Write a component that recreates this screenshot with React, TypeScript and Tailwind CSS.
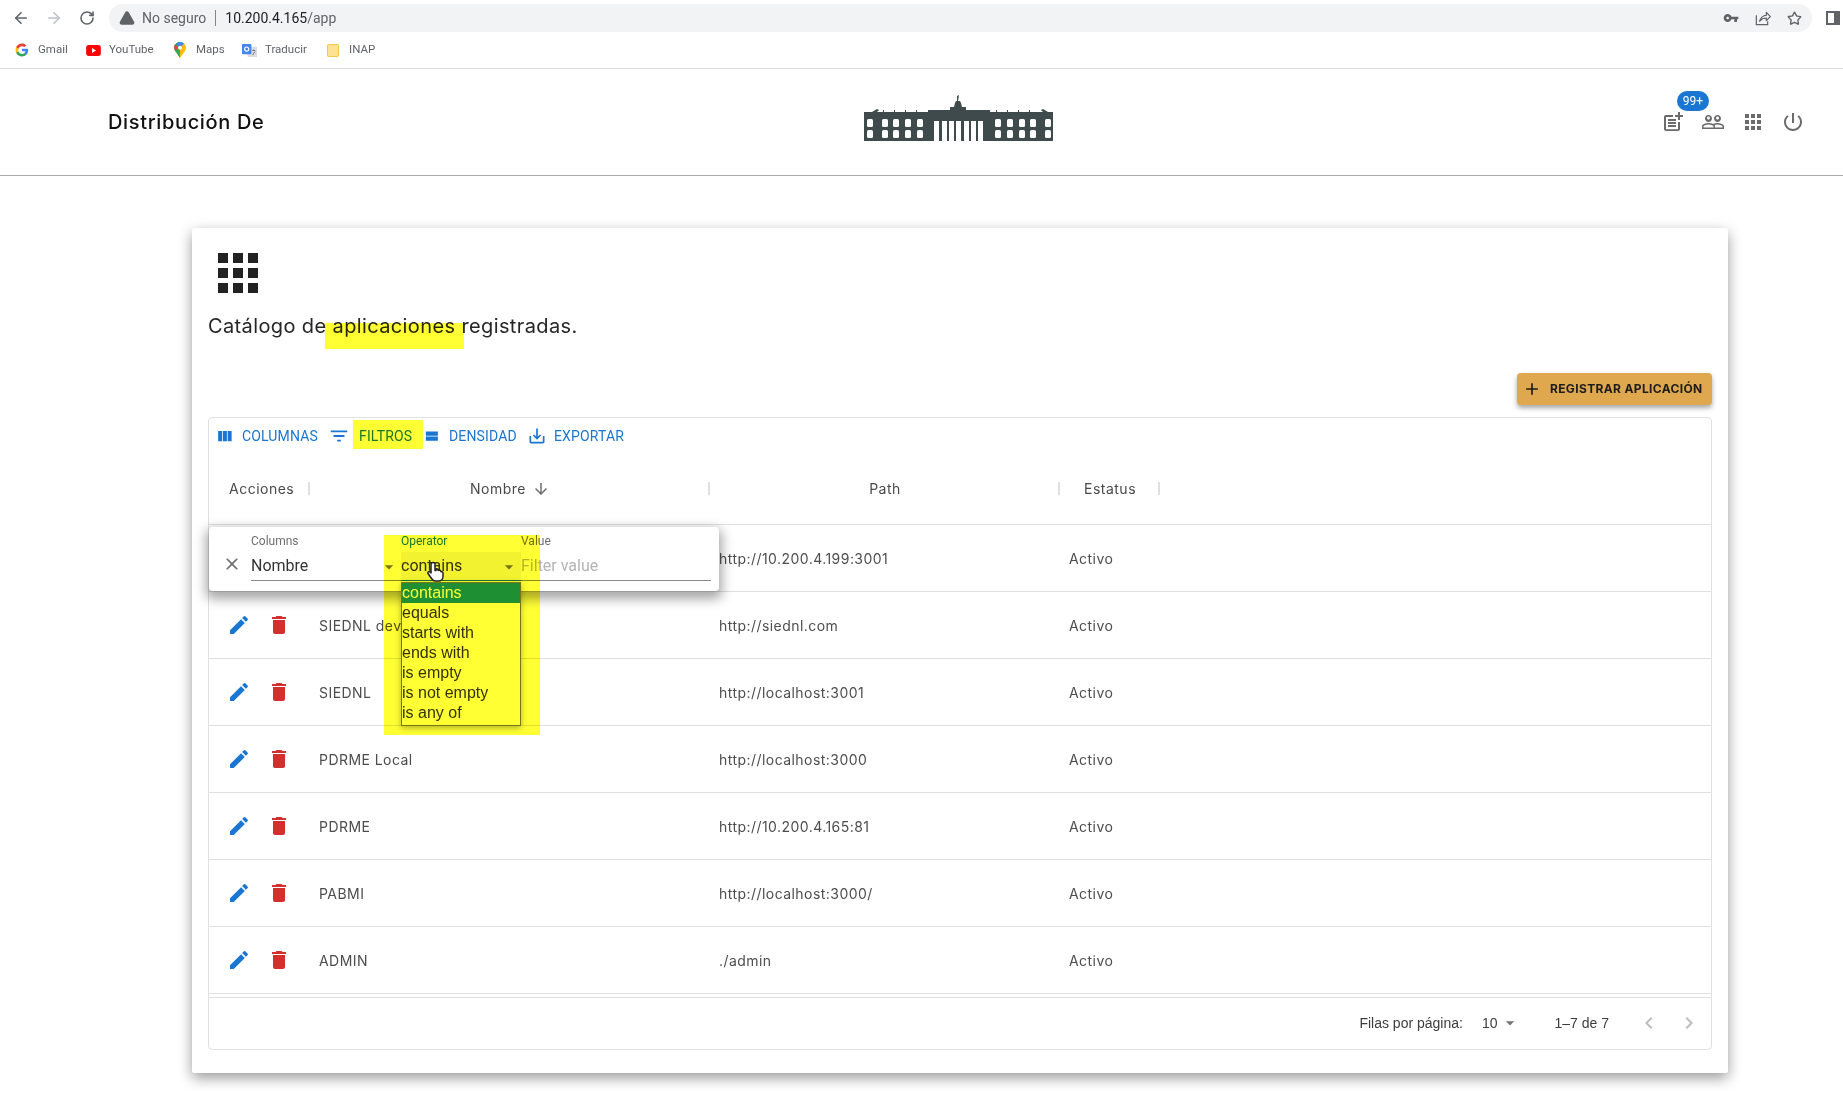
import { ArrowLeft, ArrowRight, RotateCw, TriangleAlert, Star } from "lucide-react";

const BODY_FONT = "font-['Inter','Liberation_Sans',sans-serif]";
const ROBOTO = "font-['Roboto','Liberation_Sans',sans-serif]";
const ARIAL = "font-['Liberation_Sans',Arial,sans-serif]";

const ICONS = {
  columns: "M10 18h5V5h-5v13zm-6 0h5V5H4v13zM16 5v13h5V5h-5z",
  filter: "M10 18h4v-2h-4v2zM3 6v2h18V6H3zm3 7h12v-2H6v2z",
  density: "M4 18h17v-6H4v6zM4 5v6h17V5H4z",
  exportIcon:
    "M19 12v7H5v-7H3v7c0 1.1.9 2 2 2h14c1.1 0 2-.9 2-2v-7h-2zm-6 .67l2.59-2.58L17 11.5l-5 5-5-5 1.41-1.41L11 12.67V3h2z",
  edit: "M3 17.25V21h3.75L17.81 9.94l-3.75-3.75L3 17.25zM20.71 7.04c.39-.39.39-1.02 0-1.41l-2.34-2.34a.9959.9959 0 0 0-1.41 0l-1.83 1.83 3.75 3.75 1.83-1.83z",
  trash: "M6 19c0 1.1.9 2 2 2h8c1.1 0 2-.9 2-2V7H6v12zM19 4h-3.5l-1-1h-5l-1 1H5v2h14V4z",
  apps: "M4 8h4V4H4v4zm6 12h4v-4h-4v4zm-6 0h4v-4H4v4zm0-6h4v-4H4v4zm6 0h4v-4h-4v4zm6-10v4h4V4h-4zm-6 4h4V4h-4v4zm6 6h4v-4h-4v4zm0 6h4v-4h-4v4z",
  add: "M19 13h-6v6h-2v-6H5v-2h6V5h2v6h6v2z",
  close:
    "M19 6.41 17.59 5 12 10.59 6.41 5 5 6.41 10.59 12 5 17.59 6.41 19 12 13.41 17.59 19 19 17.59 13.41 12z",
  arrowDown: "M20 12l-1.41-1.41L13 16.17V4h-2v12.17l-5.58-5.59L4 12l8 8 8-8z",
  dropDown: "M7 10l5 5 5-5z",
  chevronLeft: "M15.41 7.41 14 6l-6 6 6 6 1.41-1.41L10.83 12z",
  chevronRight: "M10 6 8.59 7.41 13.17 12l-4.58 4.59L10 18l6-6z",
  people:
    "M16.5 13c-1.2 0-3.07.34-4.5 1-1.43-.67-3.3-1-4.5-1C5.33 13 1 14.08 1 16.25V19h22v-2.75c0-2.17-4.33-3.25-6.5-3.25zm-4 4.5h-10v-1.25c0-.54 2.56-1.75 5-1.75s5 1.21 5 1.75v1.25zm9 0H14v-1.25c0-.46-.2-.86-.52-1.22.88-.3 1.96-.53 3.02-.53 2.44 0 5 1.21 5 1.75v1.25zM7.5 12c1.93 0 3.5-1.57 3.5-3.5S9.43 5 7.5 5 4 6.57 4 8.5 5.57 12 7.5 12zm0-5.5c.83 0 1.5.67 1.5 1.5s-.67 1.5-1.5 1.5S6 8.83 6 8s.67-1.5 1.5-1.5zm9 5.5c1.93 0 3.5-1.57 3.5-3.5S18.43 5 16.5 5 13 6.57 13 8.5s1.57 3.5 3.5 3.5zm0-5.5c.83 0 1.5.67 1.5 1.5s-.67 1.5-1.5 1.5S15 8.83 15 8s.67-1.5 1.5-1.5z",
  power:
    "M13 3h-2v10h2V3zm4.83 2.17-1.42 1.42C17.99 7.86 19 9.81 19 12c0 3.87-3.13 7-7 7s-7-3.13-7-7c0-2.19 1.01-4.14 2.58-5.42L6.17 5.17C4.23 6.82 3 9.26 3 12c0 4.97 4.03 9 9 9s9-4.03 9-9c0-2.74-1.23-5.18-3.17-6.83z",
  postAdd:
    "M17 19.22H5V7h7V5H5c-1.1 0-2 .9-2 2v12c0 1.1.9 2 2 2h12c1.1 0 2-.9 2-2v-7h-2v7.22zM19 2h-2v3h-3c.01.01 0 2 0 2h3v2.99c.01.01 2 0 2 0V7h3V5h-3V2zM7 9h8v2H7zM7 12v2h8v-2h-3zM7 15h8v2H7z",
  key: "M12.65 10C11.83 7.67 9.61 6 7 6c-3.31 0-6 2.69-6 6s2.69 6 6 6c2.61 0 4.83-1.67 5.65-4H17v4h4v-4h2v-4H12.65zM7 14c-1.1 0-2-.9-2-2s.9-2 2-2 2 .9 2 2-.9 2-2 2z",
};

function MuiIcon({ d, className }: { d: string; className: string }) {
  return (
    <svg viewBox="0 0 24 24" fill="currentColor" className={className}>
      <path d={d} />
    </svg>
  );
}

function GoogleIcon() {
  return (
    <svg viewBox="0 0 24 24" className="w-[14px] h-[14px]">
      <path fill="#4285F4" d="M22.56 12.25c0-.78-.07-1.53-.2-2.25H12v4.26h5.92c-.26 1.37-1.04 2.53-2.21 3.31v2.77h3.57c2.08-1.92 3.28-4.74 3.28-8.09z" />
      <path fill="#34A853" d="M12 23c2.97 0 5.46-.98 7.28-2.66l-3.57-2.77c-.98.66-2.23 1.06-3.71 1.06-2.86 0-5.29-1.93-6.16-4.53H2.18v2.84C3.99 20.53 7.7 23 12 23z" />
      <path fill="#FBBC05" d="M5.84 14.09c-.22-.66-.35-1.36-.35-2.09s.13-1.43.35-2.09V7.07H2.18C1.43 8.55 1 10.22 1 12s.43 3.45 1.18 4.93l2.85-2.22.81-.62z" />
      <path fill="#EA4335" d="M12 5.38c1.62 0 3.06.56 4.21 1.64l3.15-3.15C17.45 2.09 14.97 1 12 1 7.7 1 3.99 3.47 2.18 7.07l3.66 2.84c.87-2.6 3.3-4.53 6.16-4.53z" />
    </svg>
  );
}

function YoutubeIcon() {
  return (
    <svg viewBox="0 0 16 12" className="w-[15px] h-[11px]">
      <rect width="16" height="12" rx="3" fill="#f00" />
      <path d="M6.4 3.4v5.2L10.8 6z" fill="#fff" />
    </svg>
  );
}

function MapsIcon() {
  return (
    <svg viewBox="0 0 12 16" className="w-[12px] h-[16px]">
      <path d="M6 0C2.7 0 0 2.6 0 5.8c0 1.3.4 2.4 1.2 3.4L6 16V7.8z" fill="#34a853" />
      <path d="M6 0c3.3 0 6 2.6 6 5.8 0 1.3-.4 2.4-1.2 3.4L6 16V7.8z" fill="#fbbc04" />
      <path d="M1 2.6 4.4 5.2 2.4 8 .6 7.6C0 5.6 0 4 1 2.6z" fill="#ea4335" />
      <path d="M2 1.4C4.6-.6 8-.4 10 1.6L7.6 4.2C6.6 3.4 5 3.4 4.2 4.4z" fill="#4285f4" />
      <circle cx="6" cy="5.8" r="2" fill="#fff" />
    </svg>
  );
}

function TranslateIcon() {
  return (
    <svg viewBox="0 0 16 16" className="w-[15px] h-[15px]">
      <rect x="6" y="4" width="10" height="11" rx="1" fill="#dadce0" />
      <rect x="0" y="1" width="10" height="11" rx="1" fill="#4285f4" />
      <circle cx="5" cy="6.5" r="2.2" fill="none" stroke="#fff" strokeWidth="1.2" />
      <path d="M11 8h3M12.5 7v1M11.4 13l2.4-4" stroke="#5f6368" strokeWidth="0.9" />
    </svg>
  );
}

function FolderIcon() {
  return (
    <svg viewBox="0 0 12 13" className="w-[12px] h-[13px]">
      <rect x="0.5" y="0.5" width="11" height="12" rx="1" fill="#fde293" stroke="#f2c94c" />
    </svg>
  );
}

function ShareIcon() {
  return (
    <svg viewBox="0 0 24 24" fill="none" stroke="currentColor" strokeWidth="1.8" className="w-[16px] h-[16px] text-[#5f6368]">
      <path d="M2 8v14h17v-5" />
      <path d="M7 17c1-5 5-9 10-9V3.500l6 6.500-6 6v-4c-4 0-7 1-10 4.500z" strokeLinejoin="round" />
    </svg>
  );
}

function Bookmark({
  icon,
  label,
  className,
}: {
  icon: React.ReactNode;
  label: string;
  className: string;
}) {
  return (
    <div className={`flex items-center ${className}`}>
      <span className="flex justify-center w-[16px]">{icon}</span>
      <span className="ml-[8px] text-[11.5px] text-[#5f6368]">{label}</span>
    </div>
  );
}

function BrowserBar() {
  return (
    <div className={`border-b border-[#dadce0] ${ROBOTO}`}>
      <div className="flex items-center h-[34px] pt-[2px] pl-[12px]">
        <ArrowLeft className="w-[18px] h-[18px] text-[#5f6368]" strokeWidth={2.2} />
        <ArrowRight className="ml-[15px] w-[18px] h-[18px] text-[#bdc1c6]" strokeWidth={2.2} />
        <RotateCw className="ml-[16px] w-[16px] h-[16px] text-[#5f6368]" strokeWidth={2.4} />
        <div className="ml-[14px] flex items-center flex-1 h-[28px] mr-[14px] rounded-full bg-[#f1f3f4] pl-[10px] pr-[10px]">
          <TriangleAlert className="w-[16px] h-[16px] text-[#5f6368] fill-[#5f6368] stroke-[#5f6368]" />
          <span className="ml-[7px] text-[14px] text-[#5f6368]">No seguro</span>
          <span className="mx-[9px] w-px h-[16px] bg-[#80868b]" />
          <span className="text-[14px] text-[#202124]">
            10.200.4.165<span className="text-[#5f6368]">/app</span>
          </span>
          <MuiIcon d={ICONS.key} className="ml-auto w-[16px] h-[16px] text-[#5f6368]" />
          <span className="ml-[16px]">
            <ShareIcon />
          </span>
          <Star className="ml-[16px] w-[15px] h-[15px] text-[#5f6368]" strokeWidth={2.2} />
        </div>
        <div className="mr-[3px] w-[14px] h-[14px] border-[2px] border-[#5f6368] border-r-[6px]" />
      </div>
      <div className="flex items-center h-[34px] pb-[2px] pl-[14px]">
        <Bookmark icon={<GoogleIcon />} label="Gmail" className="w-[71px]" />
        <Bookmark icon={<YoutubeIcon />} label="YouTube" className="w-[87px]" />
        <Bookmark icon={<MapsIcon />} label="Maps" className="w-[69px]" />
        <Bookmark icon={<TranslateIcon />} label="Traducir" className="w-[84px]" />
        <Bookmark icon={<FolderIcon />} label="INAP" className="w-[60px]" />
      </div>
    </div>
  );
}

function PalaceLogo() {
  const wings = [867, 882, 893, 905, 917, 995, 1007, 1019, 1030, 1045];
  const arcade = [934, 942, 949, 956, 964, 971, 978];
  return (
    <svg viewBox="864 94 190 48" className="w-[190px] h-[48px] text-[#3f4a4c]">
      <path
        fill="currentColor"
        d="M864 112h8l5-3 2 1-2 2h6v-2h1v2h10v-2h1v2h10v-2h1v2h10v-2h1v2h11v-2h22v-3h4l1-4 1-2h1v-5l2-1-1 6h2l1 2 1 4h4v3h24v2h6v-2h1v2h10v-2h1v2h10v-2h1v2h10v-2h1v2h6h7l-2-2 2-1 5 3h5v29H864z"
      />
      {wings.map((x) => (
        <g key={x} fill="#fff">
          <rect x={x} y="119" width="6" height="8" rx="1.5" />
          <rect x={x} y="130" width="6" height="8" rx="1.5" />
        </g>
      ))}
      {arcade.map((x) => (
        <rect key={x} x={x} y="121" width="5" height="20" fill="#fff" />
      ))}
    </svg>
  );
}

function AppHeader() {
  return (
    <header className="flex items-center h-[107px] border-b border-[#ababab] pl-[108px] pr-[30px]">
      <div className={`w-[756px] text-[20px] font-medium tracking-[0.65px] text-[#111] ${BODY_FONT}`}>
        Distribución De
      </div>
      <div className="pb-[8px]">
        <PalaceLogo />
      </div>
      <div className="ml-auto flex items-center text-[#6b6b6b]">
        <div className="relative flex justify-center w-10">
          <MuiIcon d={ICONS.postAdd} className="w-[24px] h-[24px]" />
          <span className={`absolute -top-[19px] left-[24px] flex items-center justify-center h-[20px] w-[32px] rounded-full bg-[#1976d2] text-white text-[12px] ${ROBOTO}`}>
            99+
          </span>
        </div>
        <div className="flex justify-center w-10">
          <MuiIcon d={ICONS.people} className="w-[24px] h-[24px]" />
        </div>
        <div className="flex justify-center w-10">
          <MuiIcon d={ICONS.apps} className="w-[24px] h-[24px]" />
        </div>
        <div className="flex justify-center w-10">
          <MuiIcon d={ICONS.power} className="w-[24px] h-[24px]" />
        </div>
      </div>
    </header>
  );
}

function ToolbarButton({
  d,
  label,
  iconClass,
  className,
}: {
  d: string;
  label: string;
  iconClass: string;
  className: string;
}) {
  return (
    <div className={`flex items-center text-[#1976d2] ${className}`}>
      <MuiIcon d={d} className={iconClass} />
      <span className="text-[14px] tracking-[0.15px]">{label}</span>
    </div>
  );
}

function HeaderCell({
  label,
  className,
  children,
}: {
  label: string;
  className: string;
  children?: React.ReactNode;
}) {
  return (
    <div className={`relative flex items-center h-full pb-[2px] text-[14px] text-[#4a4a4a] ${className}`}>
      <span className="tracking-[0.5px]">{label}</span>
      {children}
      <span className="absolute right-0 top-[27px] h-[13px] w-[2px] bg-[#dfdfdf]" />
    </div>
  );
}

const rows = [
  { name: "", path: "http://10.200.4.199:3001" },
  { name: "SIEDNL dev", path: "http://siednl.com" },
  { name: "SIEDNL", path: "http://localhost:3001" },
  { name: "PDRME Local", path: "http://localhost:3000" },
  { name: "PDRME", path: "http://10.200.4.165:81" },
  { name: "PABMI", path: "http://localhost:3000/" },
  { name: "ADMIN", path: "./admin" },
];

function Row({ name, path }: { name: string; path: string }) {
  return (
    <div className="flex items-center h-[67px] border-b border-[#e0e0e0] text-[14px] text-[#4d4d4d] tracking-[0.45px]">
      <div className="flex items-center w-[101px] pl-[18px]">
        <MuiIcon d={ICONS.edit} className="w-[24px] h-[24px] text-[#1976d2]" />
        <MuiIcon d={ICONS.trash} className="ml-[16px] w-[24px] h-[24px] text-[#d32f2f]" />
      </div>
      <div className="w-[400px] pl-[9px]">{name}</div>
      <div className="w-[350px] pl-[9px]">{path}</div>
      <div className="pl-[9px]">Activo</div>
    </div>
  );
}

const operators = ["contains", "equals", "starts with", "ends with", "is empty", "is not empty", "is any of"];

function FilterPanel() {
  return (
    <div className={`absolute left-0 top-[109px] flex w-[510px] h-[64px] rounded-[4px] bg-white shadow-[0_5px_12px_3px_rgba(0,0,0,0.35)] ${ROBOTO}`}>
      <div className="flex items-center justify-center w-[42px] pl-[4px] pt-[10px] text-[#6f6f6f]">
        <MuiIcon d={ICONS.close} className="w-[20px] h-[20px]" />
      </div>
      <div className="w-[150px] pt-[7px]">
        <div className="text-[12px] leading-[14px] text-[#6f6f6f]">Columns</div>
        <div className="relative flex items-center h-[29px] mt-[4px] pr-[2px] border-b border-[#8a8a8a] text-[16px] text-[#333]">
          Nombre
          <MuiIcon d={ICONS.dropDown} className="absolute right-[2px] top-[5px] w-[20px] h-[20px] text-[#757575]" />
        </div>
      </div>
      <div className="relative w-[120px] pt-[7px]">
        <div className="text-[12px] leading-[14px] text-[#1976d2]">Operator</div>
        <div className="relative flex items-center h-[29px] mt-[4px] border-b border-[#1976d2] bg-[#f2f2f2] text-[16px] text-[#333]">
          contains
          <MuiIcon d={ICONS.dropDown} className="absolute right-[2px] top-[5px] w-[20px] h-[20px] text-[#757575]" />
        </div>
        <div className={`absolute left-0 top-[55px] w-[120px] h-[144px] border border-[#767676] bg-white text-[16px] leading-[20px] text-[#333] shadow-[0_2px_6px_rgba(0,0,0,0.3)] ${ARIAL}`}>
          {operators.map((op, i) => (
            <div key={op} className={i === 0 ? "bg-[#1e90ff] text-white h-[20px] leading-[19px]" : ""}>
              {op}
            </div>
          ))}
        </div>
      </div>
      <div className="w-[190px] pt-[7px]">
        <div className="text-[12px] leading-[14px] text-[#6f6f6f]">Value</div>
        <div className="flex items-center h-[29px] mt-[4px] border-b border-[#8a8a8a] text-[16px] text-[#b4b4b4]">
          Filter value
        </div>
      </div>
    </div>
  );
}

function AppsGrid() {
  return (
    <div className="relative mt-[12px] h-[633px] rounded-[4px] border border-[#e0e0e0]">
      <div className={`flex items-center h-[37px] pb-[1px] ${ROBOTO}`}>
        <ToolbarButton d={ICONS.columns} label="COLUMNAS" iconClass="ml-[6px] mr-[8px] w-[19px] h-[19px]" className="w-[119px]" />
        <ToolbarButton d={ICONS.filter} label="FILTROS" iconClass="mr-[9px] w-[22px] h-[22px]" className="w-[95px]" />
        <ToolbarButton d={ICONS.density} label="DENSIDAD" iconClass="mr-[9px] w-[17px] h-[17px]" className="w-[104px]" />
        <ToolbarButton d={ICONS.exportIcon} label="EXPORTAR" iconClass="mr-[7px] w-[20px] h-[20px]" className="" />
      </div>
      <div className="flex items-center h-[70px] border-b border-[#e0e0e0]">
        <HeaderCell label="Acciones" className="w-[101px] pl-[20px]" />
        <HeaderCell label="Nombre" className="w-[400px] justify-center">
          <MuiIcon d={ICONS.arrowDown} className="ml-[6px] w-[18px] h-[18px] text-[#6f6f6f]" />
        </HeaderCell>
        <HeaderCell label="Path" className="w-[350px] justify-center" />
        <HeaderCell label="Estatus" className="w-[100px] justify-center" />
      </div>
      {rows.map((row) => (
        <Row key={row.path} name={row.name} path={row.path} />
      ))}
      <div className={`flex items-center justify-end h-[54px] mt-[3px] pb-[3px] border-t border-[#e0e0e0] text-[14px] text-[#3d3d3d] ${ARIAL}`}>
        <span>Filas por página:</span>
        <span className="ml-[19px]">10</span>
        <MuiIcon d={ICONS.dropDown} className="ml-[2px] w-[20px] h-[20px] text-[#757575]" />
        <span className="ml-[35px]">1–7 de 7</span>
        <MuiIcon d={ICONS.chevronLeft} className="ml-[28px] w-[24px] h-[24px] text-[#bdbdbd]" />
        <MuiIcon d={ICONS.chevronRight} className="ml-[16px] mr-[10px] w-[24px] h-[24px] text-[#bdbdbd]" />
      </div>
      <FilterPanel />
    </div>
  );
}

export default function App() {
  return (
    <div className="relative h-[1100px] overflow-hidden bg-white">
      <BrowserBar />
      <AppHeader />

      <main className={`ml-[192px] mr-[115px] mt-[52px] h-[845px] rounded-[2px] bg-white px-[16px] pt-[15px] shadow-[0_5px_14px_rgba(0,0,0,0.4)] ${BODY_FONT}`}>
        <MuiIcon d={ICONS.apps} className="w-[60px] h-[60px] text-[#222]" />
        <p className="mt-[8px] text-[20px] leading-[30px] tracking-[0.38px] text-[#262626]">
          Catálogo de aplicaciones registradas.
        </p>
        <div className="flex justify-end mt-[32px]">
          <button className="flex items-center h-[32px] w-[195px] pl-[5px] rounded-[4px] bg-[#dfa84f] text-[12px] font-bold tracking-[0.35px] text-[#1c1c1c] shadow-[0_3px_5px_rgba(0,0,0,0.35)]">
            <MuiIcon d={ICONS.add} className="w-[20px] h-[20px]" />
            <span className="ml-[8px]">REGISTRAR APLICACIÓN</span>
          </button>
        </div>
        <AppsGrid />
      </main>

      {/* Marcador amarillo y cursor por encima de la captura */}
      <div className="absolute left-[325px] top-[323px] w-[139px] h-[26px] bg-[#ffff33] mix-blend-multiply" />
      <div className="absolute left-[353px] top-[420px] w-[70px] h-[29px] bg-[#ffff33] mix-blend-multiply" />
      <div className="absolute left-[384px] top-[535px] w-[156px] h-[200px] bg-[#ffff33] mix-blend-multiply" />
      <svg viewBox="0 0 24 24" className="absolute left-[424px] top-[558px] w-[24px] h-[27px]" fill="#fff" stroke="#222" strokeWidth="1.5" strokeLinejoin="round">
        <path d="M9 3c1 0 2 .8 2 2v6l1-.1V9.5c1.2-.5 2 .2 2 1.3l1 .1c1-.4 1.8.2 1.8 1.2l.7.1c1-.2 1.5.6 1.5 1.6v3.2c0 2.5-2 4.5-4.5 4.5h-3c-1.6 0-2.8-.8-3.6-2L4 14c-.7-1.2.8-2.6 2-1.6l1 1V5c0-1.2 1-2 2-2z" />
      </svg>
    </div>
  );
}
